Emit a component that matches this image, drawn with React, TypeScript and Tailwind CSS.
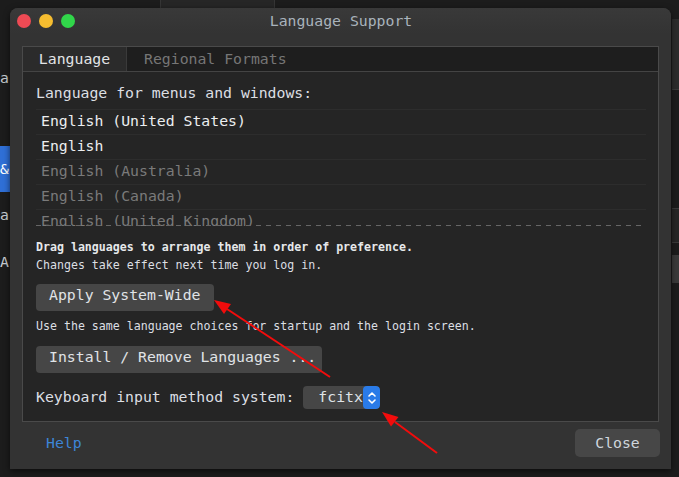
export default function App() {
  const rows = [
    { label: "English (United States)", on: true },
    { label: "English", on: true },
    { label: "English (Australia)", on: false },
    { label: "English (Canada)", on: false },
    { label: "English (United Kingdom)", on: false },
  ]

  return (
    <div className="relative w-[679px] h-[477px] overflow-hidden bg-[#1c1c1c] font-['DejaVu_Sans_Mono',monospace] text-[#dcdfe3]">
      {/* Desktop behind the dialog */}
      <div className="absolute left-[160px] top-0 w-[115px] h-[8px] bg-[#262626] border-x border-[#353535]" />
      <div className="absolute left-0 top-[146px] w-[10px] h-[46px] bg-[#2f6fd6]" />
      <span className="absolute left-0 top-[69px] text-[14.8px] leading-[18px] text-[#c8ccd0]">a</span>
      <span className="absolute left-0 top-[160px] text-[14.8px] leading-[18px] text-white">&amp;</span>
      <span className="absolute left-0 top-[206px] text-[14.8px] leading-[18px] text-[#c8ccd0]">a</span>
      <span className="absolute left-0 top-[253px] text-[14.8px] leading-[18px] text-[#c8ccd0]">Ac</span>
      <div className="absolute left-[672px] top-[19px] w-[7px] h-[71px] bg-[#2c2c2c] border-b border-[#3a3a3a]" />
      <div className="absolute left-[672px] top-[208px] w-[7px] h-[35px] bg-[#262626] border-y border-[#3a3a3a]" />
      <div className="absolute left-[672px] top-[255px] w-[7px] h-[28px] bg-[#3a3a3a]" />

      {/* Dialog window */}
      <div className="absolute left-[10px] top-[8px] w-[661px] h-[461px] rounded-t-[8px] bg-[#333333] shadow-[0_2px_6px_rgba(0,0,0,0.6)] flex flex-col">
        <div className="relative h-[26px] shrink-0 flex items-center px-[7px] gap-[8px] rounded-t-[8px] bg-gradient-to-b from-[#393939] to-[#333333]">
          <span className="w-[14px] h-[14px] rounded-full bg-[#ee4a54]" />
          <span className="w-[14px] h-[14px] rounded-full bg-[#f6bd30]" />
          <span className="w-[14px] h-[14px] rounded-full bg-[#31d64a]" />
          <div className="absolute inset-0 flex items-center justify-center text-[14.8px] text-[#a9b3bc] pl-[1px]">
            Language Support
          </div>
        </div>

        <div className="flex-1 flex flex-col px-[12px]">
          {/* Tab widget */}
          <div className="mt-[12px] h-[376px] flex flex-col border border-[#4a4a4a]">
            <div className="h-[25px] shrink-0 flex bg-[#1e1e1e] border-b border-[#444444] text-[14.8px]">
              <div className="w-[104px] flex items-center justify-center bg-[#2b2b2b] border-r border-[#3a3a3a] text-[#e2e4e6]">
                Language
              </div>
              <div className="flex items-center pl-[17px] text-[#767676]">Regional Formats</div>
            </div>

            <div className="flex-1 bg-[#252525] px-[13px] pt-[13px] flex flex-col">
              <div className="text-[14.8px] leading-[16px]">Language for menus and windows:</div>

              <div className="mt-[8px] w-[610px] h-[117px] overflow-hidden border-t border-[#2d2d2d] relative">
                {rows.map((r) => (
                  <div
                    key={r.label}
                    className={`h-[25px] flex items-center pl-[5px] pb-[1px] border-b border-[#2d2d2d] text-[14.8px] ${r.on ? "text-[#eceef0]" : "text-[#7a7a7a]"}`}
                  >
                    {r.label}
                  </div>
                ))}
                <div className="absolute left-0 right-0 bottom-[0px] h-px bg-[linear-gradient(to_right,#666_50%,transparent_50%)] bg-[length:10px_1px]" />
              </div>

              <div className="mt-[12px] text-[11.6px] leading-[18px] font-bold text-[#e6e8ea]">
                Drag languages to arrange them in order of preference.
              </div>
              <div className="text-[11.6px] leading-[18px]">Changes take effect next time you log in.</div>

              <button className="mt-[10px] w-[178px] h-[27px] rounded-[4px] bg-[#464646] text-left pl-[13px] pb-[5px] text-[14.8px] text-[#e0e3e6]">
                Apply System-Wide
              </button>

              <div className="mt-[6px] text-[11.6px] leading-[18px]">
                Use the same language choices for startup and the login screen.
              </div>

              <button className="mt-[11px] w-[286px] h-[27px] rounded-[4px] bg-[#464646] text-left pl-[13px] pb-[5px] text-[14.8px] text-[#e0e3e6]">
                Install / Remove Languages ...
              </button>

              <div className="mt-[13px] flex items-center gap-[9px] text-[14.8px]">
                <span>Keyboard input method system:</span>
                <div className="flex h-[23px] w-[77px] rounded-[4px] bg-[#464646] overflow-hidden">
                  <span className="flex-1 flex items-center pl-[15px] text-[#dfe3e7]">fcitx</span>
                  <span className="w-[17px] flex items-center justify-center bg-[#2a7be8] rounded-[4px]">
                    <svg width="10" height="16" viewBox="0 0 10 16" fill="none" stroke="white" strokeWidth="1.6" strokeLinecap="round" strokeLinejoin="round">
                      <path d="M2 6 L5 3 L8 6" />
                      <path d="M2 10 L5 13 L8 10" />
                    </svg>
                  </span>
                </div>
              </div>
            </div>
          </div>

          {/* Footer */}
          <div className="mt-[7px] h-[28px] flex items-center justify-between">
            <span className="pl-[24px] text-[14.8px] text-[#3d85d8]">Help</span>
            <button className="mr-[-1px] w-[85px] h-[28px] rounded-[5px] bg-[#474747] text-[14.8px] text-[#cfd6dd]">
              Close
            </button>
          </div>
        </div>
      </div>

      {/* Annotation arrows */}
      <svg className="absolute inset-0 pointer-events-none" width="679" height="477" viewBox="0 0 679 477">
        <line x1="330" y1="377" x2="227" y2="309" stroke="#f20c0c" strokeWidth="2" />
        <polygon points="214,300 231,304 224,314" fill="#f20c0c" />
        <line x1="437" y1="453" x2="395" y2="422" stroke="#f20c0c" strokeWidth="2" />
        <polygon points="382,412 398.5,417 391,426.5" fill="#f20c0c" />
      </svg>
    </div>
  )
}
